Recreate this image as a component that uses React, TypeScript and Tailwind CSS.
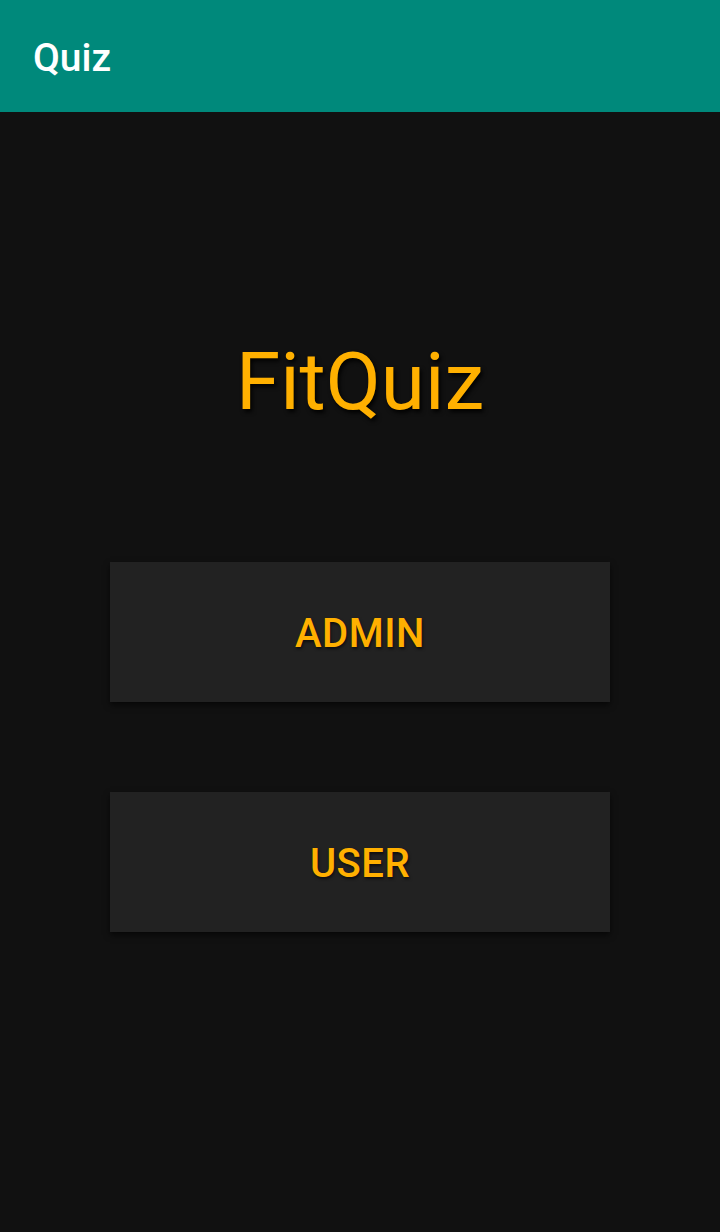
export default function App() {
  return (
    <div
      className="w-[720px] h-[1232px] bg-[#111111] flex flex-col"
      style={{ fontFamily: "Roboto, 'Noto Sans', sans-serif" }}
    >
      {/* Toolbar */}
      <div className="h-[112px] bg-[#00897b] flex items-center pl-[33px] pt-[5px] shrink-0">
        <h1 className="text-[39px] font-medium text-white leading-none">Quiz</h1>
      </div>

      {/* Title */}
      <div className="mt-[223px] flex justify-center">
        <span className="text-[80px] leading-[94px] text-[#ffb000] [text-shadow:2px_3px_4px_rgba(0,0,0,0.9)]">
          FitQuiz
        </span>
      </div>

      {/* Buttons */}
      <div className="mt-[133px] flex flex-col items-center gap-[90px]">
        <button className="w-[500px] h-[140px] pt-[4px] bg-[#222222] shadow-[0_3px_6px_rgba(0,0,0,0.6)] flex items-center justify-center">
          <span className="text-[40px] font-medium text-[#ffb000] tracking-[0.5px] [text-shadow:1px_2px_3px_rgba(0,0,0,0.6)]">
            ADMIN
          </span>
        </button>
        <button className="w-[500px] h-[140px] pt-[4px] bg-[#222222] shadow-[0_3px_6px_rgba(0,0,0,0.6)] flex items-center justify-center">
          <span className="text-[40px] font-medium text-[#ffb000] tracking-[0.5px] [text-shadow:1px_2px_3px_rgba(0,0,0,0.6)]">
            USER
          </span>
        </button>
      </div>
    </div>
  );
}
